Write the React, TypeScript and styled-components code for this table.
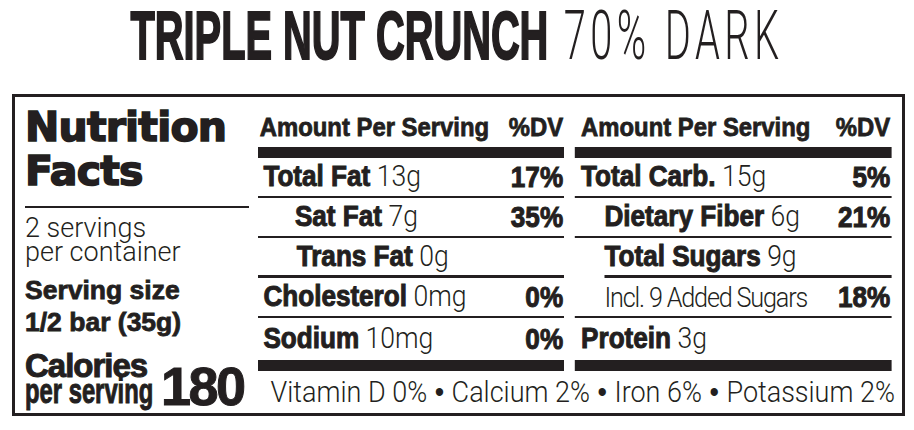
import React from "react";
import styled, { createGlobalStyle } from "styled-components";

const ink = "#231f20";
const boldFont = `"Liberation Sans", Arial, sans-serif`;
const lightFont = `Roboto, "Liberation Sans", sans-serif`;
const blackFont = `"DejaVu Sans", "Liberation Sans", sans-serif`;

const GlobalStyle = createGlobalStyle`
  html, body {
    margin: 0;
    padding: 0;
    background: #fff;
  }
  body {
    width: 914px;
    height: 430px;
    overflow: hidden;
    color: ${ink};
    font-family: ${lightFont};
  }
`;

const Page = styled.div`
  width: 914px;
  height: 430px;
  display: flex;
  flex-direction: column;
`;

const Title = styled.h1`
  margin: 0;
  height: 70px;
  box-sizing: border-box;
  padding-top: 8px;
  display: flex;
  justify-content: center;
  align-items: flex-start;
  font-size: 54px;
  line-height: 1;
  font-weight: normal;
  white-space: nowrap;
`;

// the print face is tall and very condensed
const TitleInner = styled.span`
  display: inline-block;
  line-height: 1;
  transform: scale(0.737, 1.267);
  transform-origin: center;
`;

const TitleBold = styled.span`
  font-family: ${boldFont};
  font-weight: 700;
  -webkit-text-stroke: 1.6px ${ink};
`;

const TitleLight = styled.span`
  font-family: ${lightFont};
  font-weight: 300;
  letter-spacing: 6px;
  margin-left: 21px;
`;

const Label = styled.section`
  margin: 24px 0 0 12px;
  width: 893px;
  height: 322px;
  box-sizing: border-box;
  border: 3px solid ${ink};
  padding: 0 10px;
  display: grid;
  grid-template-columns: 224px 634px;
  column-gap: 9px;
`;

/* left side */

const Side = styled.div`
  display: flex;
  flex-direction: column;
  padding-top: 8px;
`;

const Heading = styled.h2`
  margin: 0;
  font-family: ${blackFont};
  font-weight: 700;
  font-size: 41px;
  line-height: 44px;
  letter-spacing: -0.8px;
  -webkit-text-stroke: 1.6px ${ink};
`;

const Rule = styled.div`
  margin-top: 13px;
  height: 2px;
  background: ${ink};
`;

const Servings = styled.div`
  margin-top: 8px;
  font-family: ${lightFont};
  font-weight: 300;
  font-size: 27px;
  line-height: 24px;
`;

const ServingSize = styled.div`
  margin-top: 10px;
  font-family: ${boldFont};
  font-weight: 700;
  font-size: 26.5px;
  line-height: 32px;
  -webkit-text-stroke: 0.8px ${ink};
`;

const CaloriesRow = styled.div`
  margin-top: 15px;
  display: flex;
  align-items: flex-end;
  gap: 8px;
  font-family: ${boldFont};
  font-weight: 700;
  -webkit-text-stroke: 1px ${ink};
`;

const CaloriesText = styled.div`
  display: flex;
  flex-direction: column;
  width: 128px;
`;

const CaloriesTitle = styled.span`
  font-size: 33px;
  line-height: 26px;
  letter-spacing: -1px;
`;

// tall condensed line: keep its 128px slot, squeeze the glyphs into it
const CaloriesSub = styled.span`
  display: block;
  font-size: 35px;
  line-height: 24px;
  white-space: nowrap;
  transform: scaleX(0.68);
  transform-origin: left center;
`;

const CaloriesValue = styled.span`
  font-size: 54px;
  line-height: 34px;
  letter-spacing: -2.5px;
`;

/* right side: laid out wide, then squeezed like the condensed print face */

const Panel = styled.div`
  width: 634px;
  height: 316px;
`;

const PanelInner = styled.div`
  width: 704.4px;
  height: 316px;
  transform: scaleX(0.9);
  transform-origin: left top;
  display: grid;
  grid-template-columns: 340px 1fr;
  grid-template-rows: 274px 42px;
  column-gap: 12px;
`;

const Column = styled.div`
  display: flex;
  flex-direction: column;
`;

const ColHead = styled.div<{ $left: number; $right: number }>`
  height: 50px;
  box-sizing: border-box;
  display: flex;
  justify-content: space-between;
  align-items: flex-end;
  padding: 0 ${(p) => p.$right}px 7px ${(p) => p.$left}px;
  font-family: ${boldFont};
  font-weight: 700;
  font-size: 26.5px;
  line-height: 1;
  -webkit-text-stroke: 0.8px ${ink};
`;

const Bar = styled.div`
  height: 11px;
  background: ${ink};
`;

const Rows = styled.div`
  display: flex;
  flex-direction: column;
`;

const Row = styled.div<{ $indent: number; $heavy?: boolean; $inset?: boolean; $right: number }>`
  height: 40px;
  box-sizing: border-box;
  display: flex;
  align-items: center;
  justify-content: space-between;
  padding-left: ${(p) => (p.$inset ? 0 : p.$indent)}px;
  margin-left: ${(p) => (p.$inset ? p.$indent : 0)}px;
  padding-right: ${(p) => p.$right}px;
  border-bottom: ${(p) => (p.$heavy ? 3 : 2)}px solid ${ink};
  font-size: 29px;
  line-height: 1;
  white-space: nowrap;

  &:last-child {
    height: 42px;
    border-bottom: none;
  }
`;

const Name = styled.span`
  font-family: ${boldFont};
  font-weight: 700;
  -webkit-text-stroke: 1px ${ink};
`;

const Amount = styled.span`
  font-family: ${lightFont};
  font-weight: 300;
  font-size: 29.5px;
`;

const Note = styled.span`
  font-family: ${lightFont};
  font-weight: 300;
  font-size: 28px;
  letter-spacing: -1.3px;
`;

const Pct = styled.span`
  font-family: ${boldFont};
  font-weight: 700;
  -webkit-text-stroke: 1px ${ink};
`;

const Vitamins = styled.div`
  grid-column: 1 / -1;
  display: flex;
  align-items: center;
  padding-left: 14px;
  font-family: ${lightFont};
  font-weight: 300;
  font-size: 30px;
  line-height: 1;
  white-space: pre;
`;

const Dot = styled.span`
  font-family: ${boldFont};
  font-size: 30px;
`;

type Nutrient = {
  name: string;
  amount?: string;
  note?: string;
  dv?: string;
  indent: number;
  heavy?: boolean;
  inset?: boolean;
};

const fats: Nutrient[] = [
  { name: "Total Fat", amount: "13g", dv: "17%", indent: 6 },
  { name: "Sat Fat", amount: "7g", dv: "35%", indent: 41 },
  { name: "Trans Fat", amount: "0g", indent: 43, heavy: true },
  { name: "Cholesterol", amount: "0mg", dv: "0%", indent: 6 },
  { name: "Sodium", amount: "10mg", dv: "0%", indent: 6 },
];

const carbs: Nutrient[] = [
  { name: "Total Carb.", amount: "15g", dv: "5%", indent: 7 },
  { name: "Dietary Fiber", amount: "6g", dv: "21%", indent: 33 },
  { name: "Total Sugars", amount: "9g", indent: 33, heavy: true, inset: true },
  { name: "", note: "Incl. 9 Added Sugars", dv: "18%", indent: 33 },
  { name: "Protein", amount: "3g", indent: 7 },
];

const vitamins = ["Vitamin D 0%", "Calcium 2%", "Iron 6%", "Potassium 2%"];

const NutrientColumn: React.FC<{ items: Nutrient[]; headLeft: number; right: number }> = ({
  items,
  headLeft,
  right,
}) => (
  <Column>
    <ColHead $left={headLeft} $right={right}>
      <span>Amount Per Serving</span>
      <span>%DV</span>
    </ColHead>
    <Bar />
    <Rows>
      {items.map((n, i) => (
        <Row key={i} $indent={n.indent} $heavy={n.heavy} $inset={n.inset} $right={right}>
          <span>
            {n.note ? (
              <Note>{n.note}</Note>
            ) : (
              <>
                <Name>{n.name}</Name> <Amount>{n.amount}</Amount>
              </>
            )}
          </span>
          {n.dv && <Pct>{n.dv}</Pct>}
        </Row>
      ))}
    </Rows>
    <Bar />
  </Column>
);

export default function App() {
  return (
    <>
      <GlobalStyle />
      <Page>
        <Title>
          <TitleInner>
            <TitleBold>TRIPLE NUT CRUNCH</TitleBold>
            <TitleLight>70% DARK</TitleLight>
          </TitleInner>
        </Title>

        <Label>
          <Side>
            <Heading>
              Nutrition
              <br />
              Facts
            </Heading>
            <Rule />
            <Servings>
              2 servings
              <br />
              per container
            </Servings>
            <ServingSize>
              Serving size
              <br />
              1/2 bar (35g)
            </ServingSize>
            <CaloriesRow>
              <CaloriesText>
                <CaloriesTitle>Calories</CaloriesTitle>
                <CaloriesSub>per serving</CaloriesSub>
              </CaloriesText>
              <CaloriesValue>180</CaloriesValue>
            </CaloriesRow>
          </Side>

          <Panel>
            <PanelInner>
              <NutrientColumn items={fats} headLeft={2} right={1} />
              <NutrientColumn items={carbs} headLeft={7} right={2} />
              <Vitamins>
                {vitamins.map((v, i) => (
                  <React.Fragment key={v}>
                    {i > 0 && <Dot> • </Dot>}
                    {v}
                  </React.Fragment>
                ))}
              </Vitamins>
            </PanelInner>
          </Panel>
        </Label>
      </Page>
    </>
  );
}
